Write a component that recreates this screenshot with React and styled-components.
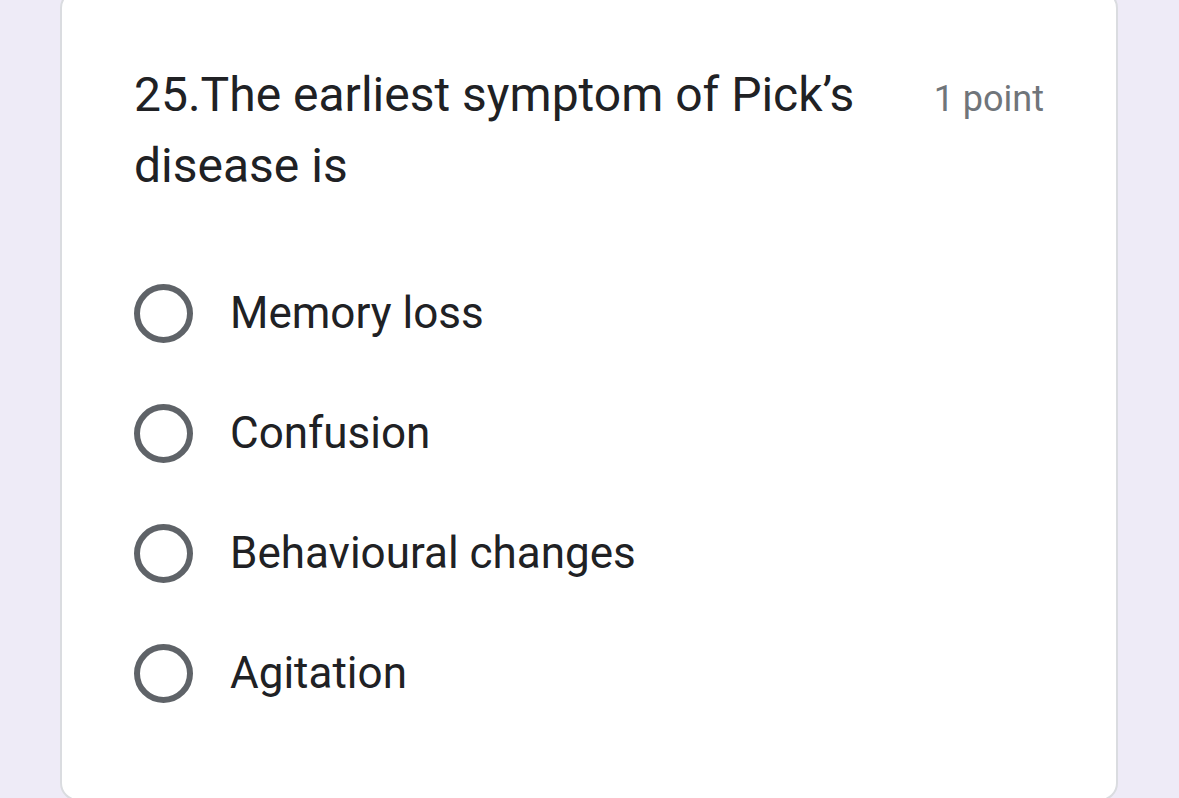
import React from "react";
import styled, { createGlobalStyle } from "styled-components";

const Global = createGlobalStyle`
  html, body { margin: 0; padding: 0; background: #eeebf7; overflow: hidden; }
  body { font-family: Roboto, "Noto Sans", Arial, sans-serif; }
`;

const Page = styled.div`
  width: 1179px;
  height: 798px;
  padding: 0 61px 0 60px;
  box-sizing: border-box;
  overflow: hidden;
`;

const Card = styled.div`
  margin-top: -10px;
  background: #ffffff;
  border: 2px solid #dadce0;
  border-radius: 18px;
  padding: 67px 72px 70px 72px;
  box-sizing: border-box;
  height: 811px;
`;

const Header = styled.div`
  display: flex;
  justify-content: space-between;
  align-items: flex-start;
  gap: 60px;
`;

const Title = styled.div`
  font-size: 48px;
  line-height: 71px;
  color: #202124;
  max-width: 760px;
`;

const Points = styled.div`
  font-size: 36px;
  line-height: 80px;
  color: #70757a;
  white-space: nowrap;
`;

const Options = styled.div`
  margin-top: 52px;
  display: flex;
  flex-direction: column;
`;

const Row = styled.label`
  display: flex;
  align-items: center;
  height: 120px;
  gap: 37px;
`;

const Radio = styled.span`
  width: 59px;
  height: 59px;
  border: 6px solid #5f6368;
  border-radius: 50%;
  box-sizing: border-box;
  flex: none;
`;

const OptionText = styled.span`
  font-size: 44px;
  color: #202124;
`;

const options = ["Memory loss", "Confusion", "Behavioural changes", "Agitation"];

export default function App() {
  return (
    <>
      <Global />
      <Page>
        <Card>
          <Header>
            <Title>25.The earliest symptom of Pick’s disease is</Title>
            <Points>1 point</Points>
          </Header>
          <Options>
            {options.map((o) => (
              <Row key={o}>
                <Radio />
                <OptionText>{o}</OptionText>
              </Row>
            ))}
          </Options>
        </Card>
      </Page>
    </>
  );
}
